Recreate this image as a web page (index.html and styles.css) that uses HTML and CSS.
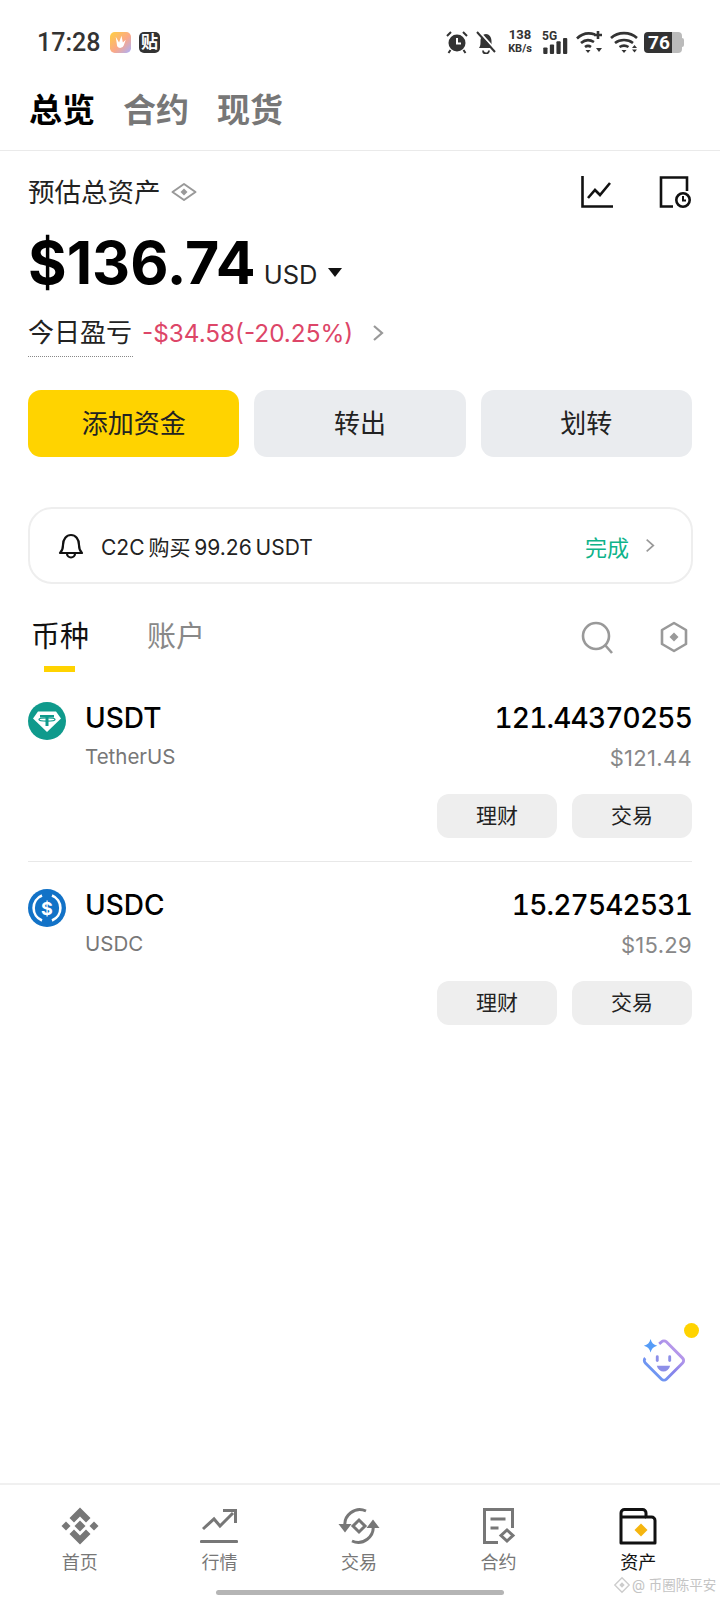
FILE: index.html
```html
<!DOCTYPE html>
<html lang="zh-CN">
  <head>
    <meta charset="UTF-8" />
    <meta name="viewport" content="width=device-width, initial-scale=1.0" />
    <title>资产总览</title>
    <link rel="stylesheet" href="styles.css">
  </head>
  <body>
    <div class="page">
      <div class="status">
        <span class="time">17:28</span>
        <svg class="app-icon" viewBox="0 0 22 22">
          <defs>
            <linearGradient id="appGrad" x1="0" y1="0" x2="1" y2="1">
              <stop offset="0" stop-color="#ffd040" />
              <stop offset="0.55" stop-color="#fba888" />
              <stop offset="1" stop-color="#a8b0ff" />
            </linearGradient>
          </defs>
          <rect width="22" height="22" rx="5" fill="url(#appGrad)" />
          <path d="M6 5l3.500 6 2.500-7 1.500 7 3-3-2 6a4 4 0 0 1-7 1z" fill="#fff" />
        </svg>
        <span class="tie-icon">贴</span>
        <div class="status-right">
          <svg class="s-alarm" viewBox="0 0 22 24">
            <circle cx="11" cy="13" r="8.500" fill="#333" />
            <path d="M11 8v5.500h4" fill="none" stroke="#fff" stroke-width="2" />
            <path d="M1 6l4-4M21 6l-4-4M4.500 20l-2 3M17.500 20l2 3" stroke="#333" stroke-width="2" />
          </svg>
          <svg class="s-bell" viewBox="0 0 22 24">
            <path d="M4 18c1.500-2 1.500-4 1.500-7 0-4 2.500-7 5.500-7s5.500 3 5.500 7c0 3 0 5 1.500 7z" fill="#333" />
            <path d="M8 20.500a3 3 0 0 0 6 0" fill="none" stroke="#333" stroke-width="1.800" />
            <path d="M3.500 1l18 20" stroke="#fff" stroke-width="2" />
            <path d="M2 2l18 20" stroke="#333" stroke-width="2" />
          </svg>
          <div class="speed"><span>138</span><span>KB/s</span></div>
          <div class="signal">
            <span class="five-g">5G</span>
            <svg class="bars" viewBox="0 0 26 17">
              <rect x="0" y="10" width="4.500" height="7" rx="1" fill="#333" />
              <rect x="7" y="7" width="4.500" height="10" rx="1" fill="#333" />
              <rect x="14" y="3.500" width="4.500" height="13.500" rx="1" fill="#333" />
              <rect x="21" y="0" width="4.500" height="17" rx="1" fill="#333" />
            </svg>
          </div>
          <svg class="s-wifi" viewBox="0 0 28 24">
            <g fill="none" stroke="#333" stroke-width="2.600">
              <path d="M1 8.500C6 3.500 13 2.500 19 4.500" />
              <path d="M5 13c4-3.500 9-3.500 13-1" />
              <path d="M9 17c2-1.500 4-1.500 6 0" />
              <path d="M22 1v8M18 5h8" />
            </g>
            <path d="M9.500 20h5l-2.500 3zM20 18h6l-3 4z" fill="#333" />
          </svg>
          <svg class="s-wifi" viewBox="0 0 28 24">
            <g fill="none" stroke="#333" stroke-width="2.600">
              <path d="M1 8c7-6.500 19-6.500 26 0" />
              <path d="M5 13c5-4 13-4 18 0" />
              <path d="M9.500 17c2.500-1.500 6.500-1.500 9 0" />
            </g>
            <path d="M11.500 20h5l-2.500 3zM22 18l2.500-3 2.500 3zM22 19.500h5l-2.500 3z" fill="#333" />
          </svg>
          <div class="battery"><span class="battery-fill">76</span><span class="battery-tip"></span></div>
        </div>
      </div>

      <div class="top-tabs">
        <span class="top-tab on">总览</span>
        <span class="top-tab">合约</span>
        <span class="top-tab">现货</span>
      </div>

      <div class="summary">
        <div class="summary-head">
          <span class="summary-label">预估总资产</span>
          <svg class="eye" viewBox="0 0 26 20">
            <path d="M1.500 10L13 2l11.500 8L13 18z" fill="none" stroke="#999" stroke-width="2" stroke-linejoin="round" />
            <path d="M13 6.500l3.500 3.500-3.500 3.500L9.500 10z" fill="#999" />
          </svg>
          <svg class="head-icon first" viewBox="0 0 32 32">
            <path d="M1.500 0v30.500H32" fill="none" stroke="#111" stroke-width="2.600" />
            <path d="M7 22l7-8 5 5 10-12" fill="none" stroke="#111" stroke-width="2.600" />
          </svg>
          <svg class="head-icon last" viewBox="0 0 32 32">
            <path d="M14 30.500H2V1.500h26V15" fill="none" stroke="#111" stroke-width="2.600" />
            <circle cx="24" cy="24" r="6.700" fill="#fff" stroke="#111" stroke-width="2.600" />
            <path d="M24 20v4.500h3" fill="none" stroke="#111" stroke-width="2" />
          </svg>
        </div>
        <div class="balance">
          <span class="amount">$136.74</span>
          <span class="unit">USD</span>
          <span class="caret"></span>
        </div>
        <div class="pnl">
          <span class="pnl-label">今日盈亏</span>
          <span class="pnl-value">-$34.58(-20.25%)</span>
          <svg class="chevron" viewBox="0 0 12 18">
            <path d="M2 2l8 7-8 7" fill="none" stroke="#999" stroke-width="2.200" />
          </svg>
        </div>
        <div class="actions">
          <div class="action primary">添加资金</div>
          <div class="action">转出</div>
          <div class="action">划转</div>
        </div>
      </div>

      <div class="notice">
        <svg class="bell" viewBox="0 0 26 28">
          <path d="M2 21c2-2 3-3.500 3-8 0-6 3.500-10 8-10s8 4 8 10c0 4.500 1 6 3 8z" fill="none" stroke="#111" stroke-width="2.200" stroke-linejoin="round" />
          <path d="M9 21.500a4 4 0 0 0 8 0" fill="none" stroke="#111" stroke-width="2.200" />
        </svg>
        <span class="notice-text">C2C 购买 99.26 USDT</span>
        <span class="notice-state">完成</span>
        <svg class="chevron small" viewBox="0 0 12 18">
          <path d="M2 2l8 7-8 7" fill="none" stroke="#999" stroke-width="2" />
        </svg>
      </div>

      <div class="list-tabs">
        <div class="list-tab on">币种<span class="tab-bar"></span></div>
        <div class="list-tab">账户</div>
        <svg class="search" viewBox="0 0 33 33">
          <circle cx="15" cy="15" r="13" fill="none" stroke="#999" stroke-width="2.600" />
          <path d="M24 24l7 8" stroke="#999" stroke-width="2.600" />
        </svg>
        <svg class="hex" viewBox="0 0 28 32">
          <path d="M14 2l12 7v14l-12 7-12-7V9z" fill="none" stroke="#999" stroke-width="2.600" stroke-linejoin="round" />
          <path d="M14 11.500l4.500 4.500-4.500 4.500L9.500 16z" fill="#999" />
        </svg>
      </div>

      <div class="coin">
        <div class="coin-top">
          <svg class="coin-icon" viewBox="0 0 38 38">
            <circle cx="19" cy="19" r="19" fill="#0f9a8c" />
            <path d="M10 9.500h18l5 7-14 13.500L5 16.500z" fill="#fff" />
            <path d="M12 13h14v2.500h-5.500V24h-3v-8.500H12z" fill="#0f9a8c" />
            <ellipse cx="19" cy="17.500" rx="8" ry="1.600" fill="none" stroke="#0f9a8c" stroke-width="1.300" />
          </svg>
          <div class="coin-name">
            <div class="symbol">USDT</div>
            <div class="full-name">TetherUS</div>
          </div>
          <div class="coin-value">
            <div class="qty">121.44370255</div>
            <div class="fiat">$121.44</div>
          </div>
        </div>
        <div class="coin-actions">
          <div class="coin-btn">理财</div>
          <div class="coin-btn">交易</div>
        </div>
      </div>

      <div class="coin last">
        <div class="coin-top">
          <svg class="coin-icon" viewBox="0 0 38 38">
            <circle cx="19" cy="19" r="19" fill="#1272c7" />
            <path d="M14 6.500a13.500 13.500 0 0 0 0 25M24 6.500a13.500 13.500 0 0 1 0 25" fill="none" stroke="#fff" stroke-width="2.600" />
            <text class="usdc-sign" x="19" y="25.500" text-anchor="middle">$</text>
          </svg>
          <div class="coin-name">
            <div class="symbol">USDC</div>
            <div class="full-name">USDC</div>
          </div>
          <div class="coin-value">
            <div class="qty">15.27542531</div>
            <div class="fiat">$15.29</div>
          </div>
        </div>
        <div class="coin-actions">
          <div class="coin-btn">理财</div>
          <div class="coin-btn">交易</div>
        </div>
      </div>

      <div class="spacer"></div>

      <div class="nav">
        <div class="nav-item">
          <svg class="nav-icon" viewBox="0 0 38 38">
            <g fill="#777">
              <path d="M19 13.500l5.500 5.500-5.500 5.500-5.500-5.500z" />
              <path d="M5 14.500l4.500 4.500L5 23.500.5 19z" />
              <path d="M33 14.500l4.500 4.500-4.500 4.500-4.500-4.500z" />
              <path d="M19 .5l10.500 10.500-4.500 4.500-6-6-6 6-4.500-4.500z" />
              <path d="M19 37.500L8.500 27l4.500-4.500 6 6 6-6 4.500 4.500z" />
            </g>
          </svg>
          <span>首页</span>
        </div>
        <div class="nav-item">
          <svg class="nav-icon" viewBox="0 0 38 38">
            <path d="M3 22l11-10 6 7 13-13" fill="none" stroke="#777" stroke-width="3" />
            <path d="M23 3.500h12.500V16" fill="none" stroke="#777" stroke-width="3" />
            <path d="M1.500 34.500h35" stroke="#777" stroke-width="3.200" stroke-linecap="round" />
          </svg>
          <span>行情</span>
        </div>
        <div class="nav-item">
          <svg class="nav-icon" viewBox="0 0 44 38">
            <path d="M8 20A15 15 0 0 1 29 4M36 18A15 15 0 0 1 15 34" fill="none" stroke="#777" stroke-width="3" />
            <path d="M1.500 17h13L8 25.500zM29.500 21h13L36 12.500z" fill="#777" />
            <path d="M22 13l6 6-6 6-6-6z" fill="none" stroke="#777" stroke-width="3" />
          </svg>
          <span>交易</span>
        </div>
        <div class="nav-item">
          <svg class="nav-icon" viewBox="0 0 38 38">
            <path d="M18 35.500H4.500v-33h28V21" fill="none" stroke="#777" stroke-width="3" />
            <path d="M10.500 12h15M10.500 21h8" stroke="#777" stroke-width="3" />
            <path d="M27 23l6 5.500-6 5.500-6-5.500z" fill="none" stroke="#777" stroke-width="3" />
          </svg>
          <span>合约</span>
        </div>
        <div class="nav-item on">
          <svg class="nav-icon" viewBox="0 0 38 38">
            <path d="M2 6a3.500 3.500 0 0 1 3.500-3.500h18a3.500 3.500 0 0 1 3.500 3.500v4h5.500a3.500 3.500 0 0 1 3.500 3.500V36H2z" fill="none" stroke="#111" stroke-width="3" stroke-linejoin="round" />
            <path d="M2 10h25" stroke="#111" stroke-width="3" />
            <path d="M22 16.500l6.500 6.500-6.500 6.500-6.500-6.500z" fill="#f5b50f" />
          </svg>
          <span>资产</span>
        </div>
      </div>
      <div class="home-row"><span class="home-bar"></span></div>

      <div class="watermark">
        <svg class="mark-icon" viewBox="0 0 20 20">
          <path d="M10 2l8 8-8 8-8-8z" fill="none" stroke="#ccc" stroke-width="1.500" />
          <path d="M10 7l3 3-3 3-3-3z" fill="#ccc" />
        </svg>
        <span>@ 币圈陈平安</span>
      </div>
      <div class="helper">
        <span class="helper-dot"></span>
        <svg class="helper-icon" viewBox="0 0 46 48">
          <defs>
            <linearGradient id="helperGrad" x1="0" y1="1" x2="1" y2="0">
              <stop offset="0" stop-color="#58a6f8" />
              <stop offset="0.5" stop-color="#8a82ea" />
              <stop offset="1" stop-color="#d8a8ea" />
            </linearGradient>
          </defs>
          <path d="M19 6l2.500-2a3.500 3.500 0 0 1 5 0l17 17a3.500 3.500 0 0 1 0 5L26.500 43a3.500 3.500 0 0 1-5 0L4.500 26a3.500 3.500 0 0 1 0-5" fill="none" stroke="url(#helperGrad)" stroke-width="3" />
          <path d="M10 1c1 4 3 6 7 7-4 1-6 3-7 7-1-4-3-6-7-7 4-1 6-3 7-7z" fill="#559cf7" />
          <rect x="15.500" y="18" width="3" height="7" rx="1.500" fill="#8d8fe8" />
          <rect x="28.500" y="18" width="3" height="7" rx="1.500" fill="#8d8fe8" />
          <path d="M16.500 29h14c-1 4-4 6-7 6s-6-2-7-6z" fill="#8d8fe8" />
        </svg>
      </div>
    </div>
  </body>
</html>
```

FILE: styles.css
```css
html,
body {
  padding: 0;
  margin: 0;
  background: #fff;
}

.page {
  position: relative;
  width: 720px;
  height: 1600px;
  display: flex;
  flex-direction: column;
  overflow: hidden;
  font-family: "Inter", "Noto Sans CJK SC", sans-serif;
  color: #111;
}

/* status bar */
.status {
  height: 84px;
  padding-left: 37px;
  padding-right: 36px;
  display: flex;
  align-items: center;
  color: #333;
}

.time {
  font-family: "Roboto", sans-serif;
  font-size: 25px;
  font-weight: 500;
  width: 73px;
}

.app-icon {
  width: 21px;
  height: 21px;
  margin-right: 8px;
}

.tie-icon {
  width: 21px;
  height: 21px;
  border-radius: 5px;
  background: #333;
  color: #fff;
  font-size: 17px;
  line-height: 21px;
  text-align: center;
  font-weight: 700;
}

.status-right {
  margin-left: auto;
  display: flex;
  align-items: center;
}

.s-alarm,
.s-bell {
  width: 22px;
  height: 24px;
  margin-right: 7px;
}

.s-bell {
  margin-right: 10px;
}

.speed {
  width: 26px;
  display: flex;
  flex-direction: column;
  align-items: center;
  font-family: "Roboto", sans-serif;
  font-weight: 700;
  font-size: 13px;
  line-height: 14px;
  margin-right: 9px;
}

.speed span:last-child {
  font-size: 11px;
}

.signal {
  width: 26px;
  height: 24px;
  position: relative;
  margin-right: 8px;
}

.five-g {
  position: absolute;
  left: 0;
  top: -1px;
  font-family: "Roboto", sans-serif;
  font-size: 12px;
  line-height: 14px;
  font-weight: 700;
}

.bars {
  position: absolute;
  left: 1px;
  bottom: 0;
  width: 25px;
  height: 16px;
}

.s-wifi {
  width: 28px;
  height: 24px;
  margin-right: 6px;
}

.battery {
  display: flex;
  align-items: center;
}

.battery-fill {
  width: 38px;
  height: 21px;
  border-radius: 4px;
  background: linear-gradient(to right, #333 74%, #bbb 74%);
  color: #fff;
  font-family: "Roboto", sans-serif;
  font-size: 19px;
  font-weight: 700;
  line-height: 21px;
  padding-left: 4px;
  box-sizing: border-box;
}

.battery-tip {
  width: 2px;
  height: 9px;
  background: #bbb;
  border-radius: 0 2px 2px 0;
}

/* top tabs */
.top-tabs {
  height: 67px;
  box-sizing: border-box;
  padding-top: 2px;
  padding-left: 29px;
  display: flex;
  gap: 28px;
  border-bottom: 1px solid #eaeaea;
}

.top-tab {
  font-size: 33px;
  line-height: 48px;
  font-weight: 700;
  color: #777;
}

.top-tab.on {
  color: #000;
}

/* summary */
.summary {
  padding: 0 28px;
}

.summary-head {
  height: 32px;
  margin-top: 25px;
  display: flex;
  align-items: center;
}

.summary-label {
  font-size: 26.5px;
  line-height: 32px;
  color: #222;
}

.eye {
  width: 26px;
  height: 20px;
  margin-left: 10px;
}

.head-icon {
  width: 32px;
  height: 32px;
}

.head-icon.first {
  margin-left: auto;
  margin-right: 46px;
}

.head-icon.last {
  margin-right: 1px;
}

.balance {
  margin-top: 23px;
  height: 64px;
  display: flex;
  align-items: baseline;
}

.amount {
  font-size: 59px;
  line-height: 64px;
  font-weight: 700;
  color: #000;
}

.unit {
  font-size: 25.5px;
  margin-left: 8px;
  color: #222;
}

.caret {
  width: 0;
  height: 0;
  margin-left: 11px;
  border-left: 7px solid transparent;
  border-right: 7px solid transparent;
  border-top: 9px solid #111;
  position: relative;
  top: -7px;
}

.pnl {
  margin-top: 15px;
  height: 46px;
  display: flex;
  align-items: center;
}

.pnl-label {
  font-size: 26px;
  line-height: 46px;
  height: 46px;
  border-bottom: 1px dotted #888;
  width: 105px;
  flex: none;
  white-space: nowrap;
  color: #222;
}

.pnl-value {
  font-size: 24.3px;
  color: #dd4668;
  margin-left: 9px;
}

.chevron {
  width: 12px;
  height: 18px;
  margin-left: 19px;
}

.actions {
  margin-top: 34px;
  display: flex;
  gap: 15px;
}

.action {
  flex: 1;
  height: 67px;
  border-radius: 13px;
  background: #eaecef;
  color: #222;
  font-size: 26px;
  line-height: 67px;
  text-align: center;
}

.action.primary {
  background: #ffd300;
}

/* notice */
.notice {
  margin: 50px 27px 0 28px;
  height: 77px;
  box-sizing: border-box;
  border: 2px solid #eee;
  border-radius: 24px;
  padding: 0 36px 0 28px;
  display: flex;
  align-items: center;
}

.bell {
  width: 26px;
  height: 28px;
  margin-right: 17px;
}

.notice-text {
  font-size: 21px;
  word-spacing: -2px;
  color: #222;
}

.notice-state {
  margin-left: auto;
  font-size: 22px;
  color: #0eb38a;
  margin-right: 2px;
}

.chevron.small {
  width: 10px;
  height: 17px;
  margin-left: 14px;
}

/* list tabs */
.list-tabs {
  margin-top: 30px;
  height: 60px;
  padding: 0 32px 0 31px;
  display: flex;
  align-items: flex-start;
}

.list-tab {
  position: relative;
  font-size: 29px;
  line-height: 46px;
  color: #888;
  width: 116px;
}

.list-tab.on {
  color: #111;
}

.tab-bar {
  position: absolute;
  left: 13px;
  top: 52px;
  width: 31px;
  height: 6px;
  background: #ffd300;
}

.search {
  width: 33px;
  height: 33px;
  margin-left: auto;
  margin-top: 7px;
}

.hex {
  width: 28px;
  height: 32px;
  margin-left: 46px;
  margin-top: 7px;
}

/* coins */
.coin {
  margin: 25px 28px 0;
  padding-bottom: 23px;
  border-bottom: 1px solid #e8e8e8;
}

.coin.last {
  margin-top: 24px;
  border-bottom: 0;
}

.coin-top {
  display: flex;
  align-items: flex-start;
}

.coin-icon {
  width: 38px;
  height: 38px;
  margin-top: 3px;
}

.coin-name {
  margin-left: 19px;
}

.symbol {
  font-size: 28px;
  line-height: 38px;
  font-weight: 500;
  color: #000;
}

.full-name {
  font-size: 20.5px;
  line-height: 26px;
  margin-top: 7px;
  color: #777;
}

.coin-value {
  margin-left: auto;
  text-align: right;
}

.qty {
  font-size: 28px;
  line-height: 38px;
  font-weight: 500;
  font-variant-numeric: tabular-nums;
  letter-spacing: -0.8px;
  color: #000;
}

.fiat {
  font-size: 22px;
  line-height: 26px;
  margin-top: 8px;
  letter-spacing: 0.3px;
  color: #888;
}

.coin-actions {
  margin-top: 23px;
  display: flex;
  justify-content: flex-end;
  gap: 15px;
}

.coin-btn {
  width: 120px;
  height: 44px;
  border-radius: 12px;
  background: #eee;
  font-size: 21px;
  line-height: 44px;
  text-align: center;
  color: #222;
}

.usdc-sign {
  font-family: "Inter", sans-serif;
  font-size: 18px;
  font-weight: 700;
  fill: #fff;
}

.spacer {
  flex: 1;
}

/* bottom nav */
.nav {
  height: 98px;
  border-top: 2px solid #f0f0f0;
  display: flex;
  padding: 0 12px 0 10px;
  box-sizing: border-box;
}

.nav-item {
  flex: 1;
  display: flex;
  flex-direction: column;
  align-items: center;
  padding-top: 22px;
  font-size: 18px;
  line-height: 24px;
  color: #777;
}

.nav-item.on {
  color: #111;
}

.nav-icon {
  height: 38px;
  width: auto;
  max-width: 44px;
  margin-bottom: 6px;
}

.home-row {
  height: 19px;
  display: flex;
  justify-content: center;
}

.home-bar {
  width: 288px;
  height: 5px;
  margin-top: 9px;
  border-radius: 3px;
  background: #b5b5b5;
}

/* over the content */
.watermark {
  position: absolute;
  left: 613px;
  top: 1575px;
  display: flex;
  align-items: center;
  gap: 1px;
  font-size: 13.5px;
  line-height: 20px;
  color: #c4c4c4;
  white-space: nowrap;
}

.mark-icon {
  width: 18px;
  height: 18px;
}

.helper {
  position: absolute;
  left: 640px;
  top: 1320px;
  width: 70px;
  height: 70px;
}

.helper-dot {
  position: absolute;
  left: 44px;
  top: 3px;
  width: 15px;
  height: 15px;
  border-radius: 50%;
  background: #ffd300;
}

.helper-icon {
  position: absolute;
  left: 1px;
  top: 18px;
  width: 44px;
  height: 46px;
}
```
